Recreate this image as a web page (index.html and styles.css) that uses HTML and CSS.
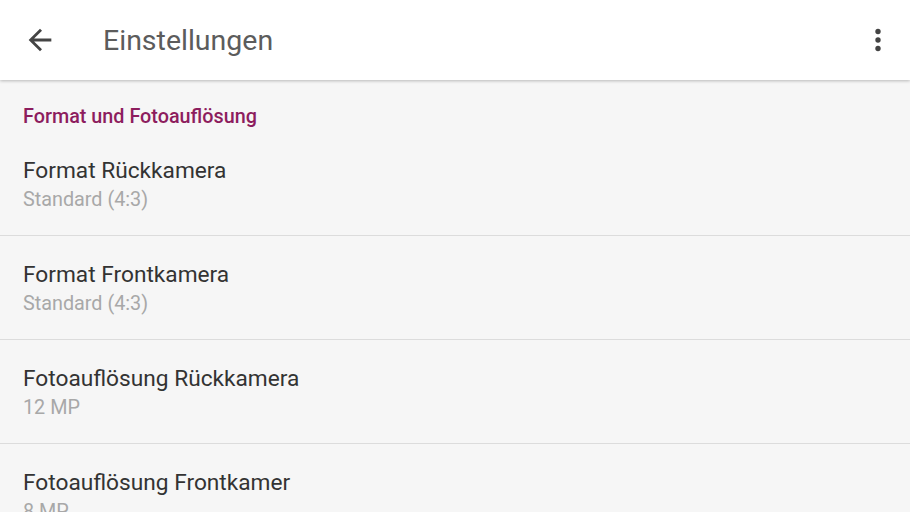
FILE: index.html
```html
<!DOCTYPE html>
<html lang="de">
<head>
  <meta charset="UTF-8" />
  <meta name="viewport" content="width=device-width, initial-scale=1.0"/>
  <title>Einstellungen</title>
  <link rel="stylesheet" href="styles.css">
</head>
<body>
  <header class="toolbar">
    <button class="icon-btn back" aria-label="Zurück">
      <svg viewBox="0 0 24 24" width="34" height="34"><path d="M20 11H7.83l5.59-5.59L12 4l-8 8 8 8 1.41-1.41L7.83 13H20v-2z" fill="#444"/></svg>
    </button>
    <h1 class="title">Einstellungen</h1>
    <button class="icon-btn more" aria-label="Mehr">
      <svg viewBox="0 0 24 24" width="34" height="34"><circle cx="12" cy="6" r="1.9" fill="#444"/><circle cx="12" cy="12" r="1.9" fill="#444"/><circle cx="12" cy="18" r="1.9" fill="#444"/></svg>
    </button>
  </header>

  <main class="prefs">
    <div class="category">Format und Fotoauflösung</div>
    <div class="pref">
      <div class="pref-title">Format Rückkamera</div>
      <div class="pref-summary">Standard (4:3)</div>
    </div>
    <div class="pref">
      <div class="pref-title">Format Frontkamera</div>
      <div class="pref-summary">Standard (4:3)</div>
    </div>
    <div class="pref">
      <div class="pref-title">Fotoauflösung Rückkamera</div>
      <div class="pref-summary">12 MP</div>
    </div>
    <div class="pref">
      <div class="pref-title">Fotoauflösung Frontkamer</div>
      <div class="pref-summary">8 MP</div>
    </div>
  </main>
</body>
</html>
```

FILE: styles.css
```css
html, body {
  margin: 0;
  padding: 0;
}
body {
  font-family: Roboto, "Noto Sans", sans-serif;
  background: #f6f6f6;
  width: 910px;
  height: 512px;
  overflow: hidden;
}
.toolbar {
  position: relative;
  z-index: 2;
  display: flex;
  align-items: center;
  height: 80px;
  background: #fff;
  box-shadow: 0 1px 3px rgba(0, 0, 0, 0.25);
}
.icon-btn {
  display: flex;
  align-items: center;
  justify-content: center;
  width: 48px;
  height: 48px;
  padding: 0;
  border: none;
  background: none;
}
.back {
  margin-left: 16px;
}
.title {
  flex: 1;
  margin: 3px 0 0 39px;
  font-size: 28.5px;
  font-weight: 400;
  color: #5c5c5c;
  line-height: 1;
}
.more {
  margin-right: 8px;
}
.category {
  padding: 24px 23px 2px;
  line-height: 26px;
  font-size: 19.8px;
  font-weight: 500;
  color: #8d1d5e;
}
.pref {
  padding: 25px 23px 20px;
  border-bottom: 1px solid #dcdcdc;
}
.pref-title {
  line-height: 28px;
  font-size: 22.7px;
  color: #333;
}
.pref-summary {
  line-height: 30px;
  font-size: 19.8px;
  color: #a8a8a8;
}
```
